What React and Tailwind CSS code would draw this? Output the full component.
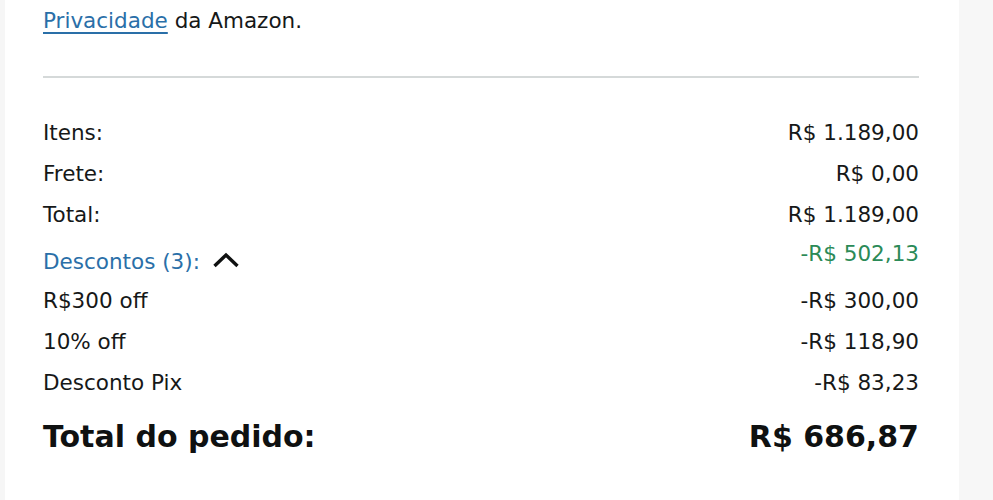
export default function App() {
  const rows = [
    ["Itens:", "R$ 1.189,00"],
    ["Frete:", "R$ 0,00"],
    ["Total:", "R$ 1.189,00"],
  ];
  const discounts = [
    ["R$300 off", "-R$ 300,00"],
    ["10% off", "-R$ 118,90"],
    ["Desconto Pix", "-R$ 83,23"],
  ];
  return (
    <div className="flex h-[500px] w-[993px] overflow-hidden bg-[#f7f7f7] text-[#161818] [font-family:'DejaVu_Sans','Noto_Sans',sans-serif]">
      <div className="w-[5px] shrink-0 bg-[#f6f6f6]" />
      <div className="flex flex-1 flex-col bg-white pl-[38px] pr-[40px] text-[21.5px]">
        <div className="pt-[8px] leading-[26px]">
          <a className="text-[#2a6fa8] underline decoration-[#2a6fa8] decoration-2 underline-offset-[4px]">Privacidade</a>{" "}
          <span>da Amazon.</span>
        </div>
        <div className="mt-[42px] h-[2px] bg-[#d5d9d9]" />
        <div className="mt-[34px] flex flex-col">
          {rows.map(([l, r]) => (
            <div key={l} className="flex justify-between leading-[41px]">
              <span>{l}</span>
              <span>{r}</span>
            </div>
          ))}
          <div className="flex items-start justify-between">
            <div className="mt-2 flex items-center leading-[37px]">
              <span className="text-[#2a6fa8]">Descontos (3):</span>
              <svg width="28" height="17" viewBox="0 0 28 17" className="ml-[12px] mb-[2px]">
                <path d="M2.5 14 L14 3 L25.5 14" fill="none" stroke="#0f1111" strokeWidth="3.4" />
              </svg>
            </div>
            <span className="leading-[37px] text-[#2b8a57]">-R$ 502,13</span>
          </div>
          {discounts.map(([l, r]) => (
            <div key={l} className="flex justify-between leading-[41px]">
              <span>{l}</span>
              <span>{r}</span>
            </div>
          ))}
          <div className="mt-[12px] flex justify-between text-[30px] font-bold leading-[44px] text-[#0f1111]">
            <span>Total do pedido:</span>
            <span>R$ 686,87</span>
          </div>
        </div>
      </div>
      <div className="w-[34px] shrink-0 bg-[#f7f7f7]" />
    </div>
  );
}
